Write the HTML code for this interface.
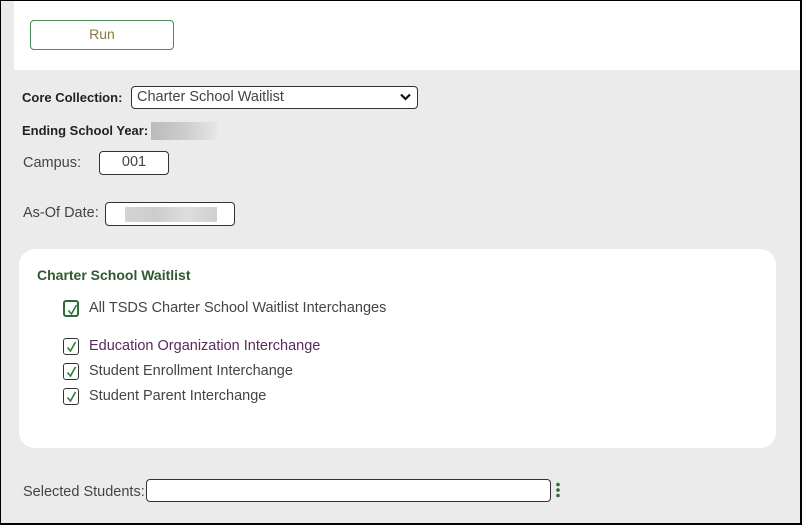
<!DOCTYPE html>
<html><head><style>
*{margin:0;padding:0;box-sizing:border-box}
body{width:802px;height:525px;overflow:hidden;font-family:"Liberation Sans",sans-serif;font-size:14.5px;color:#333;position:relative}
#f{position:absolute;left:0;top:0;width:802px;height:525px;border:1px solid #000;border-right-width:2px;border-bottom-width:2px;background:#ebebeb}
.a{position:absolute}
.top{left:14px;top:1px;width:786px;height:69px;background:#fff}
.btn{left:30px;top:20px;width:144px;height:30px;border:1.5px solid #4a8a55;border-radius:4px;background:#fff;color:#8a7a3a;text-align:center;line-height:27px;font-size:14px}
.lbl{font-weight:bold;color:#222;font-size:13px}
.box{border:1.5px solid #333;border-radius:4px;background:#fff}
.blur{background:linear-gradient(90deg,#bbb,#ccc,#e6e6e6)}
.panel{left:19px;top:249px;width:757px;height:199px;background:#fff;border-radius:16px}
.cb{width:16px;height:17px;border:1.5px solid #333;border-radius:3px;background:#fff}
.cb svg{position:absolute;left:2px;top:2px}
</style></head><body><div id="f"></div>
<div class="a top"></div>
<div class="a btn">Run</div>
<div class="a lbl" style="left:22px;top:90px">Core Collection:</div>
<div class="a box" style="left:131px;top:86px;width:287px;height:23px;padding-left:5px;line-height:20px;color:#444">Charter School Waitlist
<svg class="a" style="right:6px;top:6px" width="11" height="8" viewBox="0 0 11 8"><path d="M1 1.5L5.5 6L10 1.5" stroke="#111" stroke-width="2.2" fill="none"/></svg></div>
<div class="a lbl" style="left:22px;top:123px">Ending School Year:</div>
<div class="a blur" style="left:151px;top:122px;width:66px;height:18px"></div>
<div class="a" style="left:23px;top:155px;color:#444">Campus:</div>
<div class="a box" style="left:99px;top:151px;width:70px;height:24px;text-align:center;line-height:21px;color:#444">001</div>
<div class="a" style="left:23px;top:205px;color:#444">As-Of Date:</div>
<div class="a box" style="left:105px;top:202px;width:130px;height:24px"></div>
<div class="a blur" style="left:125px;top:207px;width:92px;height:15px;background:linear-gradient(90deg,#d4d4d4,#ccc,#ddd,#d0d0d0)"></div>
<div class="a panel"></div>
<div class="a" style="left:37px;top:267px;color:#2e5a2e;font-weight:bold;font-size:14px">Charter School Waitlist</div>
<div class="a cb" style="left:63px;top:300px;border-color:#2e6b3a;border-width:2px"><svg width="11" height="12"><path d="M1.5 6.5L4.5 10L9.5 1" stroke="#2e7d3a" stroke-width="1.6" fill="none"/></svg></div>
<div class="a" style="left:89px;top:300px;color:#444">All TSDS Charter School Waitlist Interchanges</div>
<div class="a cb" style="left:63px;top:338px"><svg width="11" height="12"><path d="M1.5 6.5L4.5 10L9.5 1" stroke="#2e7d3a" stroke-width="1.6" fill="none"/></svg></div>
<div class="a" style="left:89px;top:338px;color:#5a2a5a">Education Organization Interchange</div>
<div class="a cb" style="left:63px;top:363px"><svg width="11" height="12"><path d="M1.5 6.5L4.5 10L9.5 1" stroke="#2e7d3a" stroke-width="1.6" fill="none"/></svg></div>
<div class="a" style="left:89px;top:363px;color:#444">Student Enrollment Interchange</div>
<div class="a cb" style="left:63px;top:388px"><svg width="11" height="12"><path d="M1.5 6.5L4.5 10L9.5 1" stroke="#2e7d3a" stroke-width="1.6" fill="none"/></svg></div>
<div class="a" style="left:89px;top:388px;color:#444">Student Parent Interchange</div>
<div class="a" style="left:23px;top:484px;color:#444">Selected Students:</div>
<div class="a box" style="left:146px;top:479px;width:405px;height:23px"></div>
<svg class="a" style="left:555px;top:482px" width="6" height="16"><circle cx="3" cy="2.5" r="1.8" fill="#2e6b3a"/><circle cx="3" cy="8" r="1.8" fill="#2e6b3a"/><circle cx="3" cy="13.5" r="1.8" fill="#2e6b3a"/></svg>
</body></html>
